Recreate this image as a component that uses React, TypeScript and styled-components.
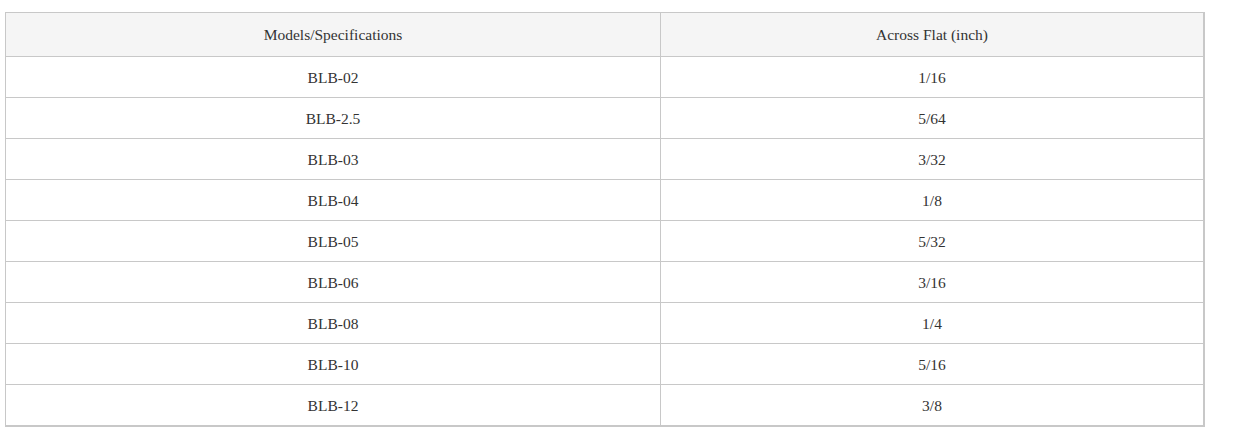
import React from "react";
import styled, { createGlobalStyle } from "styled-components";

const GlobalStyle = createGlobalStyle`
  body {
    margin: 0;
    background: #fff;
    font-family: "Liberation Serif", "Times New Roman", serif;
  }
`;

const Page = styled.div`
  padding: 12px 0 0 5px;
`;

const Table = styled.table`
  width: 1200px;
  border-collapse: collapse;
  table-layout: fixed;
  border-right: 2px solid #c8c8c8;
  border-bottom: 2px solid #c8c8c8;
  font-size: 15.5px;
  color: #333;
`;

const HeadCell = styled.th`
  height: 42px;
  padding: 1px 0 0;
  border: 1px solid #c8c8c8;
  background: #f5f5f5;
  font-weight: normal;
  text-align: center;
  vertical-align: middle;
`;

const Cell = styled.td`
  height: 39px;
  padding: 1px 0 0;
  border: 1px solid #c8c8c8;
  text-align: center;
  vertical-align: middle;
`;

const rows: [string, string][] = [
  ["BLB-02", "1/16"],
  ["BLB-2.5", "5/64"],
  ["BLB-03", "3/32"],
  ["BLB-04", "1/8"],
  ["BLB-05", "5/32"],
  ["BLB-06", "3/16"],
  ["BLB-08", "1/4"],
  ["BLB-10", "5/16"],
  ["BLB-12", "3/8"],
];

export default function App() {
  return (
    <Page>
      <GlobalStyle />
      <Table>
        <colgroup>
          <col style={{ width: 655 }} />
          <col />
        </colgroup>
        <thead>
          <tr>
            <HeadCell>Models/Specifications</HeadCell>
            <HeadCell>Across Flat (inch)</HeadCell>
          </tr>
        </thead>
        <tbody>
          {rows.map(([model, flat]) => (
            <tr key={model}>
              <Cell>{model}</Cell>
              <Cell>{flat}</Cell>
            </tr>
          ))}
        </tbody>
      </Table>
    </Page>
  );
}
